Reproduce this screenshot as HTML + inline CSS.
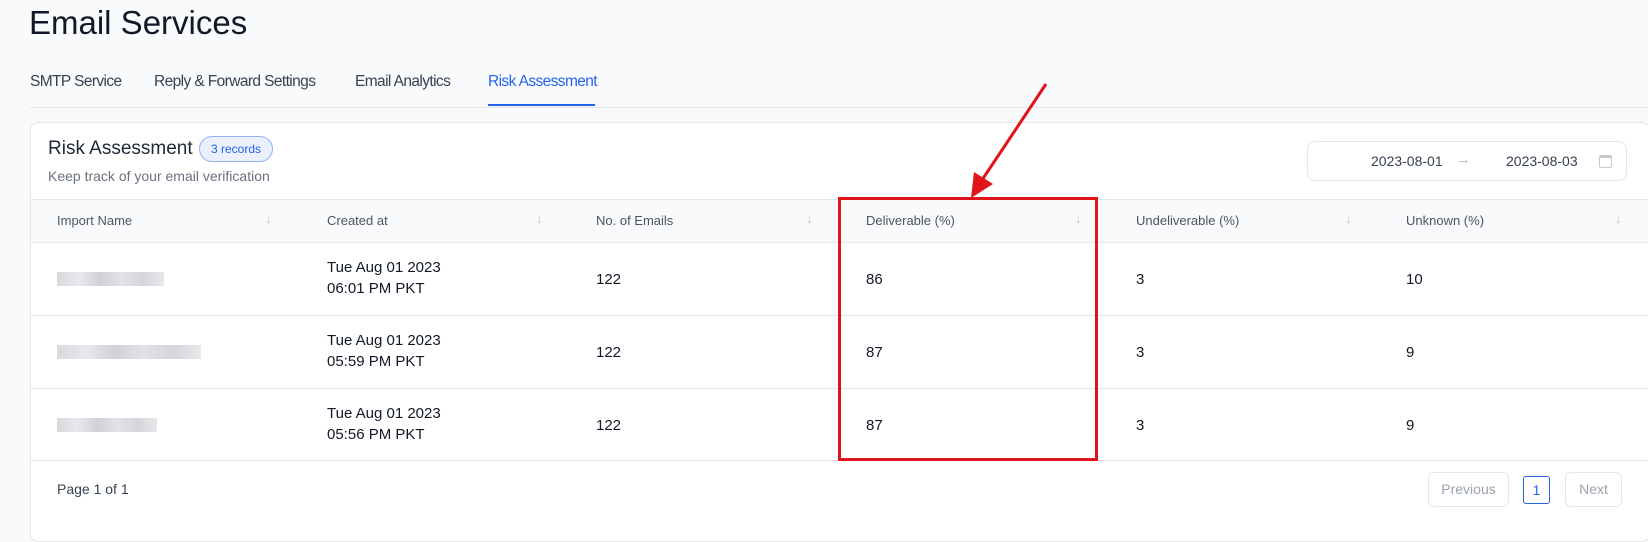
<!DOCTYPE html>
<html><head><meta charset="utf-8"><style>
*{box-sizing:border-box;margin:0;padding:0}
body{width:1648px;height:508px;overflow:hidden;background:#f9fafb;font-family:"Liberation Sans",sans-serif;color:#111827;position:relative}
.abs{position:absolute;white-space:nowrap}
.tab{position:absolute;top:73px;font-size:15.5px;color:#374151;letter-spacing:-0.6px}
.card{position:absolute;left:30px;top:122px;width:1620px;height:420px;background:#fff;border:1px solid #e5e7eb;border-radius:8px;overflow:hidden}
.hdr{position:absolute;left:0;top:76px;width:100%;height:44px;background:#f9fafb;border-top:1px solid #e5e7eb;border-bottom:1px solid #e5e7eb}
.th{position:absolute;top:90px;font-size:13px;color:#4b5563}
.ar{position:absolute;top:88px;font-size:13px;color:#c4c8ce}
.row{position:absolute;left:0;width:100%;border-bottom:1px solid #e5e7eb}
.td{position:absolute;font-size:15px;color:#111827;line-height:21px}
.blur{position:absolute;height:14px;background:linear-gradient(90deg,#d6d8dc,#e8e9ec 20%,#cfd1d5 40%,#e2e3e6 60%,#d4d6da 80%,#e6e7ea)}
</style></head><body>
<div class="abs" style="left:29px;top:4px;font-size:33px;color:#111827">Email Services</div>
<div class="tab" style="left:30px">SMTP Service</div>
<div class="tab" style="left:154px">Reply &amp; Forward Settings</div>
<div class="tab" style="left:355px">Email Analytics</div>
<div class="tab" style="left:488px;color:#2563eb">Risk Assessment</div>
<div class="abs" style="left:30px;top:107px;width:1618px;height:1px;background:#e5e7eb"></div>
<div class="abs" style="left:488px;top:104px;width:107px;height:2px;background:#2563eb"></div>

<div class="card">
<div class="abs" style="left:17px;top:15px;font-size:19px;color:#1f2937">Risk Assessment</div>
<div class="abs" style="left:168px;top:13px;width:74px;height:26px;border:1px solid #93b4f0;background:#eaf1fd;border-radius:13px;font-size:12px;color:#2563eb;text-align:center;line-height:24px">3 records</div>
<div class="abs" style="left:17px;top:45px;font-size:14px;color:#6b7280">Keep track of your email verification</div>
<div class="abs" style="left:1276px;top:18px;width:320px;height:40px;border:1px solid #e5e7eb;border-radius:8px">
 <span class="abs" style="left:63px;top:11px;font-size:14px;color:#374151">2023-08-01</span>
 <span class="abs" style="left:148px;top:9px;font-size:15px;color:#b5b9bf">→</span>
 <span class="abs" style="left:198px;top:11px;font-size:14px;color:#374151">2023-08-03</span>
 <span class="abs" style="left:291px;top:13px;width:13px;height:13px;border:1px solid #c4c8ce;border-radius:2px;border-top-width:3px"></span>
</div>
<div class="hdr"></div>
<div class="th" style="left:26px">Import Name</div><div class="ar" style="left:234px">↓</div>
<div class="th" style="left:296px">Created at</div><div class="ar" style="left:505px">↓</div>
<div class="th" style="left:565px">No. of Emails</div><div class="ar" style="left:775px">↓</div>
<div class="th" style="left:835px">Deliverable (%)</div><div class="ar" style="left:1044px">↓</div>
<div class="th" style="left:1105px">Undeliverable (%)</div><div class="ar" style="left:1314px">↓</div>
<div class="th" style="left:1375px">Unknown (%)</div><div class="ar" style="left:1584px">↓</div>

<div class="row" style="top:120px;height:73px"></div>
<div class="row" style="top:193px;height:73px"></div>
<div class="row" style="top:266px;height:72px"></div>

<div class="blur" style="left:26px;top:149px;width:107px"></div>
<div class="td" style="left:296px;top:134px">Tue Aug 01 2023<br>06:01 PM PKT</div>
<div class="td" style="left:565px;top:146px">122</div><div class="td" style="left:835px;top:146px">86</div>
<div class="td" style="left:1105px;top:146px">3</div><div class="td" style="left:1375px;top:146px">10</div>

<div class="blur" style="left:26px;top:222px;width:144px"></div>
<div class="td" style="left:296px;top:207px">Tue Aug 01 2023<br>05:59 PM PKT</div>
<div class="td" style="left:565px;top:219px">122</div><div class="td" style="left:835px;top:219px">87</div>
<div class="td" style="left:1105px;top:219px">3</div><div class="td" style="left:1375px;top:219px">9</div>

<div class="blur" style="left:26px;top:295px;width:100px"></div>
<div class="td" style="left:296px;top:280px">Tue Aug 01 2023<br>05:56 PM PKT</div>
<div class="td" style="left:565px;top:292px">122</div><div class="td" style="left:835px;top:292px">87</div>
<div class="td" style="left:1105px;top:292px">3</div><div class="td" style="left:1375px;top:292px">9</div>

<div class="abs" style="left:26px;top:358px;font-size:14px;color:#374151">Page 1 of 1</div>
<div class="abs" style="left:1397px;top:349px;width:81px;height:35px;border:1px solid #e5e7eb;border-radius:6px;font-size:14px;color:#9ca3af;text-align:center;line-height:33px">Previous</div>
<div class="abs" style="left:1492px;top:353px;width:27px;height:28px;border:1px solid #2563eb;border-radius:3px;font-size:14px;color:#2563eb;text-align:center;line-height:26px">1</div>
<div class="abs" style="left:1534px;top:349px;width:57px;height:35px;border:1px solid #e5e7eb;border-radius:6px;font-size:14px;color:#9ca3af;text-align:center;line-height:33px">Next</div>
</div>

<div class="abs" style="left:838px;top:197px;width:260px;height:264px;border:3px solid #e0141b"></div>
<svg class="abs" style="left:0;top:0" width="1648" height="508">
<line x1="1046" y1="84" x2="982" y2="180" stroke="#e0141b" stroke-width="3"/>
<polygon points="971,198 974,172 993,184" fill="#e0141b"/>
</svg>
</body></html>
